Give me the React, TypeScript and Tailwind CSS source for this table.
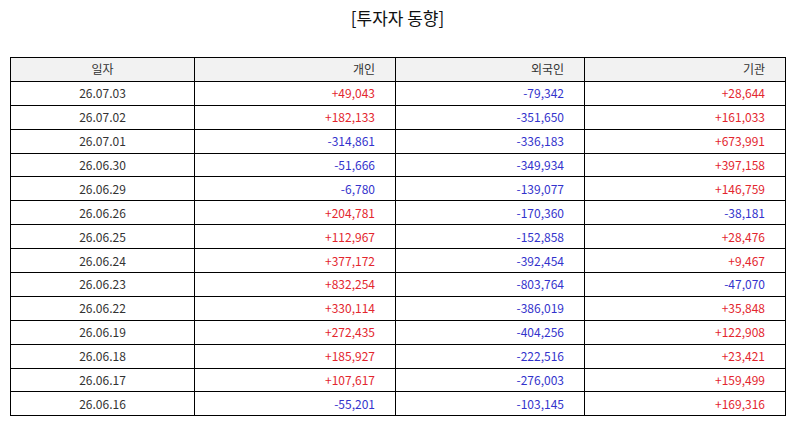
import React from "react";

const rows: [string, string, string, string][] = [
  ["26.07.03", "+49,043", "-79,342", "+28,644"],
  ["26.07.02", "+182,133", "-351,650", "+161,033"],
  ["26.07.01", "-314,861", "-336,183", "+673,991"],
  ["26.06.30", "-51,666", "-349,934", "+397,158"],
  ["26.06.29", "-6,780", "-139,077", "+146,759"],
  ["26.06.26", "+204,781", "-170,360", "-38,181"],
  ["26.06.25", "+112,967", "-152,858", "+28,476"],
  ["26.06.24", "+377,172", "-392,454", "+9,467"],
  ["26.06.23", "+832,254", "-803,764", "-47,070"],
  ["26.06.22", "+330,114", "-386,019", "+35,848"],
  ["26.06.19", "+272,435", "-404,256", "+122,908"],
  ["26.06.18", "+185,927", "-222,516", "+23,421"],
  ["26.06.17", "+107,617", "-276,003", "+159,499"],
  ["26.06.16", "-55,201", "-103,145", "+169,316"],
];

const numColor = (v: string) => (v.startsWith("-") ? "text-[#3333cc]" : "text-[#e3262e]");

const App = () => {
  return (
    <div
      className="w-[795px] h-[425px] bg-white text-[#333]"
      style={{ fontFamily: '"Noto Sans CJK KR", "Noto Sans", sans-serif' }}
    >
      <h1 className="pt-[5px] h-[57px] text-center text-[17px] leading-[26px] text-[#111]">[투자자 동향]</h1>
      <table className="ml-[10px] w-[775px] table-fixed border-collapse text-[12px]">
        <colgroup>
          <col className="w-[184px]" />
          <col className="w-[201px]" />
          <col className="w-[189px]" />
          <col className="w-[201px]" />
        </colgroup>
        <thead>
          <tr className="h-[23.9px] bg-[#f2f2f2]">
            <th className="border border-black font-normal text-center p-0">일자</th>
            <th className="border border-black font-normal text-right pr-[20px] p-0">개인</th>
            <th className="border border-black font-normal text-right pr-[20px] p-0">외국인</th>
            <th className="border border-black font-normal text-right pr-[20px] p-0">기관</th>
          </tr>
        </thead>
        <tbody>
          {rows.map((r) => (
            <tr key={r[0]} className="h-[23.9px]">
              <td className="border border-black text-center p-0">{r[0]}</td>
              <td className={`border border-black text-right pr-[20px] p-0 ${numColor(r[1])}`}>{r[1]}</td>
              <td className={`border border-black text-right pr-[20px] p-0 ${numColor(r[2])}`}>{r[2]}</td>
              <td className={`border border-black text-right pr-[20px] p-0 ${numColor(r[3])}`}>{r[3]}</td>
            </tr>
          ))}
        </tbody>
      </table>
    </div>
  );
};

export default App;
